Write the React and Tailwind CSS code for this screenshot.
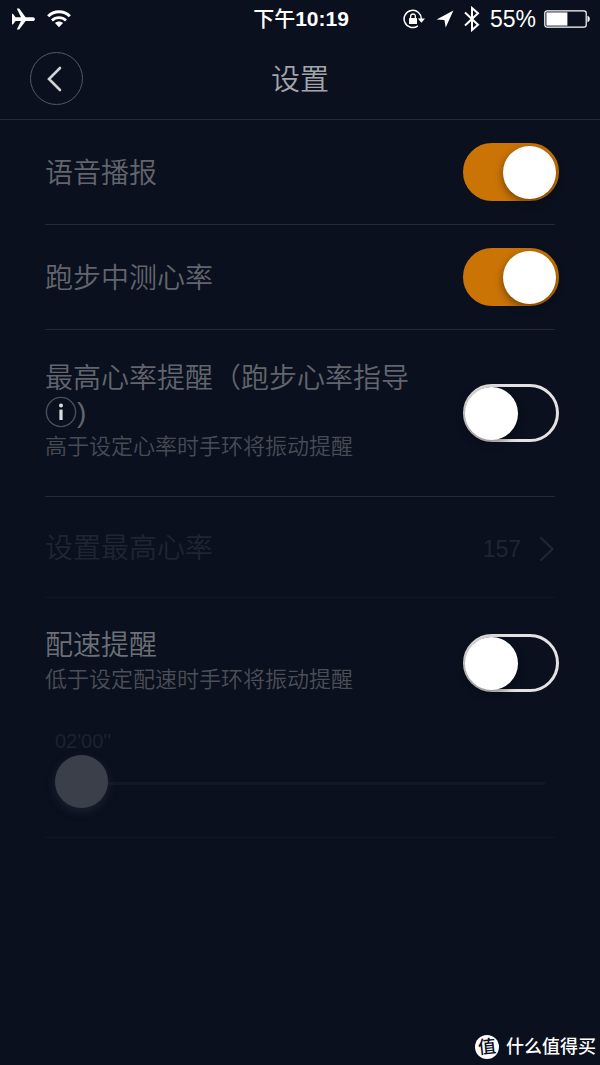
import { useState } from "react";

function Toggle({ id, defaultChecked }) {
  return (
    <input
      id={id}
      type="checkbox"
      role="switch"
      defaultChecked={defaultChecked}
      className="-mr-1 flex h-[58px] w-24 shrink-0 cursor-pointer appearance-none items-center rounded-full border-[3px] border-[#e4e2e3] before:-ml-px before:size-[53px] before:shrink-0 before:rounded-full before:bg-white before:shadow-[0_3px_8px_rgba(0,0,0,0.45)] before:content-[''] checked:border-[#cb7406] checked:bg-[#cb7406] checked:before:ml-[37px]"
    />
  );
}

function Row({ id, title, defaultChecked }) {
  return (
    <div className="flex items-center gap-8 border-b border-[#232936] py-[23px]">
      <label htmlFor={id} className="flex-1 pt-1 text-[28px] leading-[34px] text-[#62656d]">
        {title}
      </label>
      <Toggle id={id} defaultChecked={defaultChecked} />
    </div>
  );
}

function StatusBar() {
  return (
    <div className="grid h-[38px] grid-cols-[1fr_auto_1fr] items-center pr-[10px] pl-3 text-white">
      <div className="flex items-center gap-3">
        <svg width="23" height="22" viewBox="0 0 23 22" fill="currentColor" aria-hidden="true">
          <path d="M0 5.5 L1.3 6.2 L3.6 9.3 H9 L4.8 .6 H7.2 L13.6 9.3 H20.6 C23.7 9.3 23.7 13 20.6 13 H13.6 L7.2 21.4 H4.8 L9 13 H3.6 L1.3 16 L0 16.7 V5.5Z" />
        </svg>
        <svg width="24" height="18" viewBox="0 0 24 18" fill="none" stroke="currentColor" aria-hidden="true">
          <path d="M1.2 6.3 C7 .3 17 .3 22.8 6.3" strokeWidth="3" />
          <path d="M5 10.4 C9 6.6 15 6.6 19 10.4" strokeWidth="2.7" />
          <path d="M8 13 C10.3 11 13.7 11 16 13 L12 17.2Z" fill="currentColor" stroke="none" />
        </svg>
      </div>
      <div className="text-[21px] leading-6 font-medium">
        下午<span className="font-bold">10:19</span>
      </div>
      <div className="flex items-center justify-end gap-[10px]">
        <svg width="23" height="20" viewBox="0 0 23 20" fill="none" aria-hidden="true">
          <path d="M18.3 10.5 A8.6 8.6 0 1 0 14.8 16.9" stroke="currentColor" strokeWidth="1.5" />
          <path d="M14.8 9.4 H22 L18.4 13.7Z" fill="currentColor" />
          <rect x="6" y="9" width="8" height="6" rx=".6" fill="currentColor" />
          <path d="M7.6 9.3 V7.4 C7.6 4.2 12.4 4.2 12.4 7.4 V9.3" stroke="currentColor" strokeWidth="1.3" />
        </svg>
        <svg width="18" height="18" viewBox="0 0 18 18" fill="currentColor" aria-hidden="true">
          <path d="M17.4 .6 L9.7 17.4 L8.4 10 L.6 9.4Z" />
        </svg>
        <svg width="16" height="26" viewBox="0 0 16 26" fill="none" stroke="currentColor" strokeWidth="2" aria-hidden="true">
          <path d="M1 6.5 L14 18.7 L8 24 V2 L14 7.3 L1 19.5" />
        </svg>
        <div className="flex items-center gap-2">
          <span className="text-[23px] leading-6">55%</span>
          <svg width="46" height="18" viewBox="0 0 46 18" fill="none" aria-hidden="true">
            <rect x=".8" y=".8" width="41.4" height="16.4" rx="2.2" stroke="currentColor" strokeWidth="1.2" />
            <rect x="2.4" y="2.4" width="21" height="13.2" fill="currentColor" />
            <path d="M43.5 5.8 C46.5 6.3 46.5 11.7 43.5 12.2Z" fill="currentColor" />
          </svg>
        </div>
      </div>
    </div>
  );
}

export default function App() {
  const [pace, setPace] = useState(120);
  const minutes = String(Math.floor(pace / 60)).padStart(2, "0");
  const seconds = String(pace % 60).padStart(2, "0");

  return (
    <div className="flex min-h-screen flex-col bg-[#0a101e] font-['Liberation_Sans','Noto_Sans_CJK_SC',sans-serif]">
      <StatusBar />
      <header className="grid grid-cols-[1fr_auto_1fr] items-center border-b border-[#232936] px-[30px] py-[14px]">
        <button
          type="button"
          aria-label="返回"
          className="flex size-[53px] items-center justify-center rounded-full border border-[#555862] text-[#d2d3d5]"
        >
          <svg width="16" height="26" viewBox="0 0 16 26" fill="none" stroke="currentColor" strokeWidth="2.6" strokeLinecap="round" className="mr-[6px]" aria-hidden="true">
            <path d="M14 2 L3 13 L14 24" />
          </svg>
        </button>
        <h1 className="pt-0.5 text-[29px] leading-9 font-[350] text-[#a3a5aa]">设置</h1>
      </header>

      <main className="px-[45px] font-[350]">
        <Row id="voice" title="语音播报" defaultChecked />
        <Row id="heart" title="跑步中测心率" defaultChecked />

        <div className="flex items-center gap-8 border-b border-[#232936] py-8">
          <div className="flex-1">
            <div className="text-[28px] leading-[34px] text-[#62656d]">
              <label htmlFor="max-alert">最高心率提醒（跑步心率指导</label>
              <button
                type="button"
                aria-label="心率指导说明"
                className="inline-flex size-8 items-center justify-center rounded-full align-top"
              >
                <svg width="32" height="32" viewBox="0 0 32 32" fill="none" aria-hidden="true">
                  <circle cx="16" cy="16" r="14.6" stroke="#4b4e57" strokeWidth="1.4" />
                  <circle cx="16" cy="9.6" r="2" fill="#dcdddf" />
                  <path d="M16 13.6 V24" stroke="#dcdddf" strokeWidth="3.2" />
                </svg>
              </button>
              )
            </div>
            <p className="text-[22px] leading-[34px] text-[#484b54]">高于设定心率时手环将振动提醒</p>
          </div>
          <Toggle id="max-alert" />
        </div>

        <button
          type="button"
          disabled
          className="flex w-full items-center border-b border-[#111725] pt-[35px] pb-[31px] text-left text-[#1f2532]"
        >
          <span className="flex-1 text-[28px] leading-[34px]">设置最高心率</span>
          <span className="text-[23px] leading-[34px]">157</span>
          <svg width="16" height="26" viewBox="0 0 16 26" fill="none" stroke="currentColor" strokeWidth="2.4" strokeLinecap="round" className="ml-[18px]" aria-hidden="true">
            <path d="M2 2 L13.5 13 L2 24" />
          </svg>
        </button>

        <section className="border-b border-[#111725] pt-[31px] pb-[29px]">
          <div className="flex items-center gap-8">
            <div className="flex-1">
              <label htmlFor="pace-alert" className="block text-[28px] leading-[34px] text-[#6d7077]">
                配速提醒
              </label>
              <p className="text-[22px] leading-[34px] text-[#4b4e56]">低于设定配速时手环将振动提醒</p>
            </div>
            <Toggle id="pace-alert" />
          </div>
          <div className="mt-8 px-[10px]">
            <label htmlFor="pace" className="block text-[20px] leading-6 text-[#1c2230]">
              {minutes}'{seconds}''
            </label>
            <input
              id="pace"
              type="range"
              min="120"
              max="900"
              value={pace}
              onChange={(e) => setPace(Number(e.target.value))}
              className="mt-0.5 block h-[53px] w-full cursor-pointer appearance-none bg-transparent [&::-webkit-slider-runnable-track]:h-[53px] [&::-webkit-slider-runnable-track]:bg-[linear-gradient(#121826,#121826)] [&::-webkit-slider-runnable-track]:bg-[length:100%_3px] [&::-webkit-slider-runnable-track]:bg-[position:0_27px] [&::-webkit-slider-runnable-track]:bg-no-repeat [&::-webkit-slider-thumb]:size-[53px] [&::-webkit-slider-thumb]:appearance-none [&::-webkit-slider-thumb]:rounded-full [&::-webkit-slider-thumb]:bg-[#3b3f49] [&::-webkit-slider-thumb]:shadow-[0_3px_10px_rgba(59,63,73,0.4)]"
            />
          </div>
        </section>
      </main>

      <footer className="mt-auto flex items-center justify-end gap-[7px] pr-1 pb-[6px] text-white">
        <span className="flex size-6 items-center justify-center rounded-full bg-white text-[18px] leading-6 font-medium text-[#0a101e]">
          <span className="-rotate-6">值</span>
        </span>
        <span className="text-[18px] leading-6 font-medium">什么值得买</span>
      </footer>
    </div>
  );
}
